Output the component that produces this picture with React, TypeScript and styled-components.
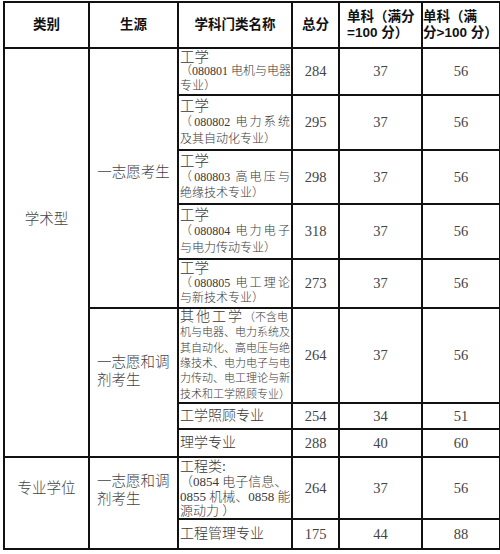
import React from "react";
import styled, { createGlobalStyle } from "styled-components";

const Global = createGlobalStyle`
  html, body { margin: 0; padding: 0; background: #fff; }
  body { font-family: "Liberation Serif", "Noto Sans CJK SC", serif; }
`;

const Page = styled.div`
  padding: 1px 0 0 3px;
  width: 500px;
  box-sizing: border-box;
`;

const Table = styled.table`
  border-collapse: collapse;
  table-layout: fixed;
  width: 496px;
  td, th {
    border: 2px solid #111;
    padding: 0;
  }
`;

const Row = styled.tr<{ $h: number }>`
  height: ${(p) => p.$h}px;
`;

const Head = styled.th<{ $pad?: number }>`
  font-family: "Liberation Sans", "Noto Sans CJK SC", sans-serif;
  font-weight: 700;
  font-size: 13.5px;
  line-height: 16px;
  color: #111;
  text-align: ${(p) => (p.$pad !== undefined ? "left" : "center")};
  padding-left: ${(p) => p.$pad ?? 0}px !important;
  white-space: nowrap;
  vertical-align: middle;
`;

const Label = styled.td<{ $left?: boolean; $lift?: number }>`
  font-family: "Liberation Serif", "Noto Sans CJK SC", serif;
  font-weight: 300;
  font-size: 14.5px;
  line-height: 18px;
  color: #444;
  text-align: ${(p) => (p.$left ? "left" : "center")};
  padding-left: ${(p) => (p.$left ? "7px" : "0")} !important;
  padding-bottom: ${(p) => p.$lift ?? 0}px !important;
  vertical-align: middle;
`;

const Major = styled.td`
  font-family: "Liberation Serif", "Noto Sans CJK SC", serif;
  font-weight: 300;
  color: #383838;
  text-align: left;
  vertical-align: middle;
  padding: 0 1px !important;
`;

const Line = styled.div<{ $size?: number; $lh?: number; $justify?: boolean }>`
  font-size: ${(p) => p.$size ?? 12}px;
  line-height: ${(p) => p.$lh ?? 15}px;
  white-space: nowrap;
  overflow: hidden;
  text-align: ${(p) => (p.$justify ? "justify" : "left")};
  text-align-last: ${(p) => (p.$justify ? "justify" : "left")};
`;

const Big = styled.span`
  font-size: 14px;
  letter-spacing: 2px;
`;

const Num = styled.td`
  font-family: "Liberation Serif", "Noto Sans CJK SC", serif;
  font-size: 14.5px;
  color: #444;
  text-align: center;
  vertical-align: middle;
`;

type GongRow = { code: string; a: string; b: string; total: number; h: number; lh: number };

const gongRows: GongRow[] = [
  { code: "080801", a: "电机与电器", b: "专业）", total: 284, h: 47, lh: 14.5 },
  { code: "080802", a: "电力系统", b: "及其自动化专业）", total: 295, h: 55, lh: 16.5 },
  { code: "080803", a: "高电压与", b: "绝缘技术专业）", total: 298, h: 54, lh: 16 },
  { code: "080804", a: "电力电子", b: "与电力传动专业）", total: 318, h: 55, lh: 16.5 },
  { code: "080805", a: "电工理论", b: "与新技术专业）", total: 273, h: 49, lh: 15 },
];

export default function App() {
  return (
    <Page>
      <Global />
      <Table>
        <colgroup>
          <col style={{ width: 85 }} />
          <col style={{ width: 89 }} />
          <col style={{ width: 114 }} />
          <col style={{ width: 47 }} />
          <col style={{ width: 83 }} />
          <col style={{ width: 78 }} />
        </colgroup>
        <tbody>
          <Row $h={46}>
            <Head>类别</Head>
            <Head>生源</Head>
            <Head>学科门类名称</Head>
            <Head>总分</Head>
            <Head $pad={7}>
              单科（满分
              <br />
              =100 分）
            </Head>
            <Head $pad={0}>
              单科（满
              <br />
              分&gt;100 分）
            </Head>
          </Row>
          {gongRows.map((r, i) => (
            <Row $h={r.h} key={r.code}>
              {i === 0 && (
                <Label rowSpan={8} $lift={68}>
                  学术型
                </Label>
              )}
              {i === 0 && (
                <Label rowSpan={5} $lift={12}>
                  一志愿考生
                </Label>
              )}
              <Major>
                <Line $size={14.5} $lh={r.lh}>
                  工学
                </Line>
                <Line $lh={r.lh} $justify>
                  （{r.code} {r.a}
                </Line>
                <Line $lh={r.lh}>{r.b}</Line>
              </Major>
              <Num>{r.total}</Num>
              <Num>37</Num>
              <Num>56</Num>
            </Row>
          ))}
          <Row $h={95}>
            <Label rowSpan={3} $left $lift={23}>
              一志愿和调
              <br />
              剂考生
            </Label>
            <Major>
              <Line $size={11} $lh={15.3}>
                <Big>其他工学</Big>（不含电
              </Line>
              <Line $size={11} $lh={15.3} $justify>
                机与电器、电力系统及
              </Line>
              <Line $size={11} $lh={15.3} $justify>
                其自动化、高电压与绝
              </Line>
              <Line $size={11} $lh={15.3} $justify>
                缘技术、电力电子与电
              </Line>
              <Line $size={11} $lh={15.3} $justify>
                力传动、电工理论与新
              </Line>
              <Line $size={11} $lh={15.3}>
                技术和工学照顾专业）
              </Line>
            </Major>
            <Num>264</Num>
            <Num>37</Num>
            <Num>56</Num>
          </Row>
          <Row $h={26}>
            <Major>
              <Line $size={14} $lh={20}>
                工学照顾专业
              </Line>
            </Major>
            <Num>254</Num>
            <Num>34</Num>
            <Num>51</Num>
          </Row>
          <Row $h={28}>
            <Major>
              <Line $size={14} $lh={20}>
                理学专业
              </Line>
            </Major>
            <Num>288</Num>
            <Num>40</Num>
            <Num>60</Num>
          </Row>
          <Row $h={62}>
            <Label rowSpan={2} $lift={30}>
              专业学位
            </Label>
            <Label rowSpan={2} $left $lift={26}>
              一志愿和调
              <br />
              剂考生
            </Label>
            <Major>
              <Line $size={14} $lh={15}>
                工程类:
              </Line>
              <Line $size={13} $lh={15}>
                （0854 电子信息、
              </Line>
              <Line $size={13} $lh={15} $justify>
                0855 机械、0858 能
              </Line>
              <Line $size={13} $lh={14}>
                源动力 ）
              </Line>
            </Major>
            <Num>264</Num>
            <Num>37</Num>
            <Num>56</Num>
          </Row>
          <Row $h={30}>
            <Major>
              <Line $size={14} $lh={20}>
                工程管理专业
              </Line>
            </Major>
            <Num>175</Num>
            <Num>44</Num>
            <Num>88</Num>
          </Row>
        </tbody>
      </Table>
    </Page>
  );
}
